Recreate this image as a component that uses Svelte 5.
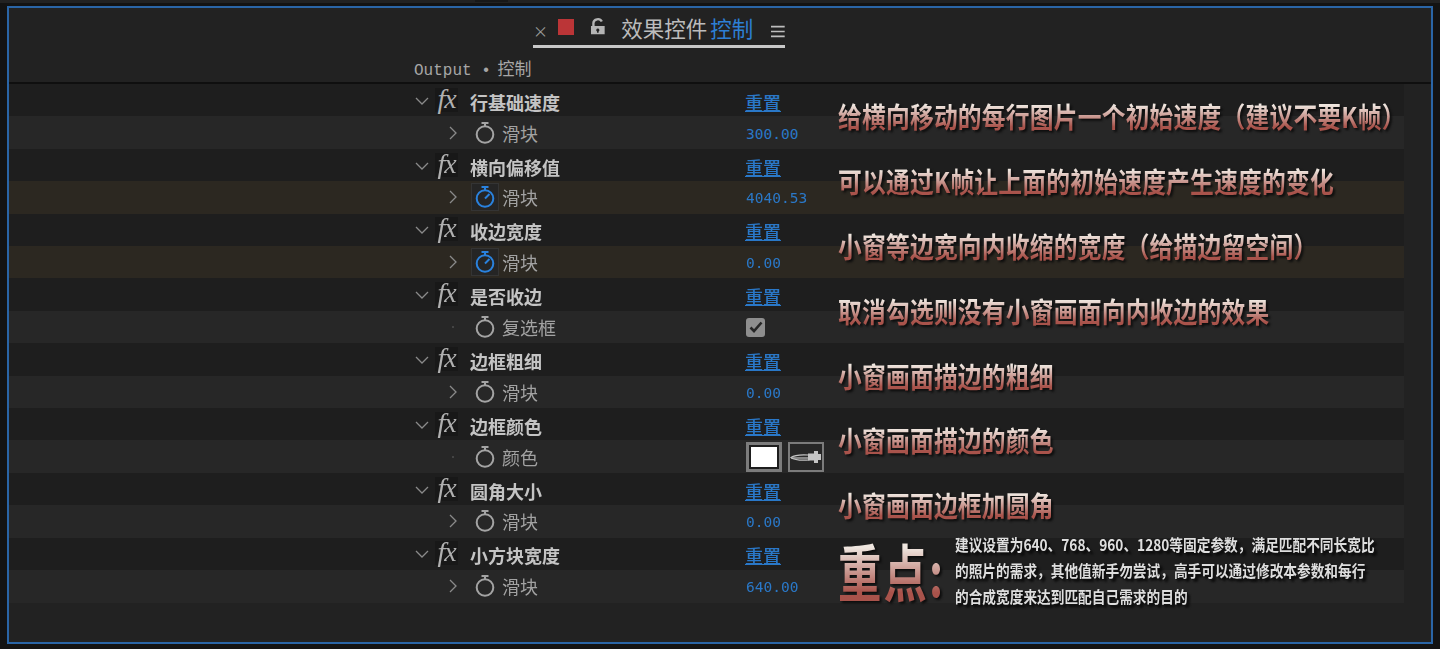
<script>
  const groups = [
    { title: '行基础速度', sub: '滑块', value: '300.00', note: '给横向移动的每行图片一个初始速度（建议不要K帧）' },
    { title: '横向偏移值', sub: '滑块', value: '4040.53', keyed: true, note: '可以通过K帧让上面的初始速度产生速度的变化' },
    { title: '收边宽度', sub: '滑块', value: '0.00', keyed: true, note: '小窗等边宽向内收缩的宽度（给描边留空间）' },
    { title: '是否收边', sub: '复选框', type: 'check', note: '取消勾选则没有小窗画面向内收边的效果' },
    { title: '边框粗细', sub: '滑块', value: '0.00', note: '小窗画面描边的粗细' },
    { title: '边框颜色', sub: '颜色', type: 'color', note: '小窗画面描边的颜色' },
    { title: '圆角大小', sub: '滑块', value: '0.00', note: '小窗画面边框加圆角' },
    { title: '小方块宽度', sub: '滑块', value: '640.00', big: true }
  ];
</script>

<div class="screen">
  <div class="notch"></div>
  <div class="panel">
    <header class="head">
      <div class="tab">
        <span class="close">×</span>
        <span class="swatch"></span>
        <svg class="lock" width="16" height="18" viewBox="0 0 16 18">
          <path d="M3.500 8V5a4.500 4 0 0 1 8.600-1.600" fill="none" stroke="#b4b4b4" stroke-width="2.400" />
          <path fill-rule="evenodd" d="M1 8h14v8.500H1zM8 10.500a1.600 1.600 0 0 0-.8 3V15h1.600v-1.500a1.600 1.600 0 0 0-.8-3z" fill="#b4b4b4" />
        </svg>
        <span class="tab-title">效果控件<b>控制</b></span>
        <svg class="menu" width="14" height="13" viewBox="0 0 14 13">
          <path d="M0 1.500h14M0 6.500h14M0 11.500h14" stroke="#bdbdbd" stroke-width="1.600" />
        </svg>
      </div>
      <div class="crumb">Output • <span>控制</span></div>
    </header>

    <div class="list">
      {#each groups as g}
        <section class="group">
          <div class="row top">
            <svg class="chev" width="14" height="8" viewBox="0 0 14 8">
              <path d="M1 1l6 6 6-6" fill="none" stroke="#8a8a8a" stroke-width="1.300" />
            </svg>
            <span class="fx">fx</span>
            <span class="title">{g.title}</span>
            <span class="reset">重置</span>
          </div>
          <div class="row sub" class:keyed={g.keyed}>
            <span class="twist">
              {#if g.type}
                <i class="dot"></i>
              {:else}
                <svg width="8" height="14" viewBox="0 0 8 14">
                  <path d="M1 1l6 6-6 6" fill="none" stroke="#8a8a8a" stroke-width="1.300" />
                </svg>
              {/if}
            </span>
            <span class="watch" class:on={g.keyed}>
              <svg width="22" height="24" viewBox="0 0 22 24">
                <path d="M7.500 2h7M11 2v3" fill="none" stroke="currentColor" stroke-width="2" />
                <circle cx="11" cy="13.500" r="8.300" fill="none" stroke="currentColor" stroke-width="2" />
                {#if g.keyed}
                  <path d="M11 13.500l4.500-4.500" stroke="currentColor" stroke-width="2" />
                {/if}
              </svg>
            </span>
            <span class="label">{g.sub}</span>
            {#if g.type === 'check'}
              <span class="check">
                <svg width="14" height="12" viewBox="0 0 14 12">
                  <path d="M1.500 6.500l3.500 3.500 7.500-8.500" fill="none" stroke="#262626" stroke-width="2.600" />
                </svg>
              </span>
            {:else if g.type === 'color'}
              <span class="color"><i></i></span>
              <span class="dropper">
                <svg width="32" height="14" viewBox="0 0 32 14">
                  <path d="M1 7.500C5 4.500 12 4.500 19 5v5C12 10.500 5 10.500 1 7.500z" fill="#2a2a2a" stroke="#c4c4c4" stroke-width="1.200" />
                  <path d="M1 8h18" stroke="#c4c4c4" stroke-width="1.200" />
                  <path d="M18 3.500h6V1h4v3h3v6h-3v3h-4v-2.500h-6z" fill="#c4c4c4" />
                </svg>
              </span>
            {:else}
              <span class="value">{g.value}</span>
            {/if}
          </div>
          {#if g.note}
            <div class="note"><span class="grad">{g.note}</span></div>
          {/if}
          {#if g.big}
            <div class="note">
              <span class="grad huge">重点:</span>
              <p class="remark">
                <span>建议设置为640、768、960、1280等固定参数，满足匹配不同长宽比</span>
                <span>的照片的需求，其他值新手勿尝试，高手可以通过修改本参数和每行</span>
                <span>的合成宽度来达到匹配自己需求的目的</span>
              </p>
            </div>
          {/if}
        </section>
      {/each}
    </div>
  </div>
</div>

<style>
  :global(body) {
    margin: 0;
    background: #151515;
  }

  .screen {
    width: 1440px;
    height: 649px;
    box-sizing: border-box;
    padding: 0 7px 5px 7px;
    overflow: hidden;
    background: linear-gradient(#222222 3px, #131313 3px);
    font-family: "Noto Sans CJK SC", "Liberation Sans", sans-serif;
  }

  .notch {
    width: 33px;
    height: 2px;
    margin: 0 0 4px 468px;
    background: #181818;
  }

  .panel {
    height: 638px;
    box-sizing: border-box;
    border: 2px solid #2a65a6;
    background: #222222;
    filter: blur(0.35px);
  }

  .head {
    height: 76px;
    box-sizing: border-box;
    border-bottom: 2px solid #0f0f0f;
    position: relative;
  }

  .tab {
    position: absolute;
    left: 524px;
    top: 6px;
    width: 252px;
    height: 31px;
    display: flex;
    align-items: center;
    border-bottom: 3px solid #c8c8c8;
    color: #b8b8b8;
  }

  .close {
    width: 11px;
    margin-left: 0;
    text-align: center;
    font-size: 15px;
    color: #9a9a9a;
    line-height: 1;
    padding: 2px 0 0 0;
  }

  .swatch {
    width: 16px;
    height: 16px;
    background: #bb3537;
    margin-left: 14px;
    margin-top: -5px;
  }

  .lock {
    margin-left: 16px;
    margin-top: -5px;
  }

  .tab-title {
    margin: -3px 0 0 16px;
    font-size: 21.500px;
    line-height: 30px;
    white-space: nowrap;
    color: #bcbcbc;
  }

  .tab-title b {
    margin-left: 3px;
    font-weight: 400;
    color: #2d7fd4;
  }

  .menu {
    margin-left: 18px;
    margin-top: 3px;
  }

  .crumb {
    position: absolute;
    left: 405px;
    top: 48px;
    font-family: "Liberation Mono", "Noto Sans CJK SC", monospace;
    font-size: 16px;
    line-height: 24px;
    color: #a6a6a6;
    white-space: nowrap;
  }

  .crumb span {
    margin-left: -3px;
    font-family: "Noto Sans CJK SC", sans-serif;
    font-size: 17px;
  }

  .list {
    width: 1395px;
  }

  .group {
    position: relative;
  }

  .row {
    height: 32.420px;
    display: flex;
    align-items: center;
    box-sizing: border-box;
  }

  .top {
    background: #1e1e1e;
    padding-left: 406px;
    padding-top: 1px;
  }

  .sub {
    background: #272727;
    padding-left: 436px;
  }

  .keyed {
    background: #2c2821;
  }

  .fx {
    width: 23px;
    height: 24px;
    margin-left: 6px;
    margin-top: -2px;
    background: #181818;
    color: #b0b0b0;
    font-family: "Liberation Serif", serif;
    font-style: italic;
    font-size: 28px;
    line-height: 22px;
    text-align: center;
    letter-spacing: -1px;
  }

  .title {
    margin-left: 12px;
    width: 275px;
    font-size: 18px;
    font-weight: 700;
    color: #c4c4c4;
    line-height: 24px;
    padding-top: 2px;
  }

  .reset {
    font-size: 18px;
    font-weight: 500;
    color: #2a78c8;
    text-decoration: underline;
    text-underline-offset: 1px;
    text-decoration-thickness: 1px;
    line-height: 24px;
    padding-top: 2px;
  }

  .twist {
    width: 15px;
    display: flex;
    justify-content: center;
    align-items: center;
  }

  .dot {
    width: 2px;
    height: 2px;
    background: #444444;
  }

  .watch {
    width: 28px;
    height: 28px;
    margin-left: 11px;
    display: flex;
    align-items: center;
    justify-content: center;
    color: #a4a4a4;
    box-sizing: border-box;
  }

  .watch.on {
    color: #2a82de;
    background: #252525;
    border: 1px solid #343434;
  }

  .label {
    margin-left: 3px;
    width: 244px;
    font-size: 18px;
    color: #a2a2a2;
    line-height: 24px;
  }

  .value {
    font-family: "DejaVu Sans Mono", monospace;
    font-size: 14.500px;
    color: #2a78c8;
    margin-top: 2px;
  }

  .check {
    width: 19px;
    height: 19px;
    border-radius: 3px;
    background: #8e8e8e;
    display: flex;
    align-items: center;
    justify-content: center;
  }

  .color {
    width: 36px;
    height: 30px;
    box-sizing: border-box;
    border: 3px solid #7c7c7c;
    padding: 2px;
    background: #1d1d1d;
  }

  .color i {
    display: block;
    height: 100%;
    background: #ffffff;
  }

  .dropper {
    width: 36px;
    height: 30px;
    box-sizing: border-box;
    border: 2px solid #7c7c7c;
    margin-left: 6px;
    display: flex;
    align-items: center;
    justify-content: center;
  }

  .note {
    position: absolute;
    left: 829px;
    top: 0;
    height: 100%;
    display: flex;
    align-items: center;
    filter: drop-shadow(2px 2px 1px #0c0c0c);
    white-space: nowrap;
  }

  .grad {
    display: inline-block;
    font-size: 28px;
    font-weight: 700;
    line-height: 34px;
    letter-spacing: 0.2px;
    transform: scaleX(0.85);
    transform-origin: left center;
    background: linear-gradient(#efe6df 18%, #a9534b 82%);
    -webkit-background-clip: text;
    background-clip: text;
    color: transparent;
  }

  .huge {
    flex: none;
    width: 165px;
    margin-right: -48px;
    font-size: 62px;
    font-weight: 700;
    line-height: 70px;
    letter-spacing: 3px;
    transform: scaleX(0.7);
  }

  .remark {
    margin: 0;
    display: flex;
    flex-direction: column;
    font-size: 16px;
    line-height: 26px;
    font-weight: 700;
    color: #dedede;
    filter: drop-shadow(1px 1px 0 #111);
  }

  .remark span {
    display: block;
    transform: scaleX(0.855);
    transform-origin: left center;
  }
</style>
